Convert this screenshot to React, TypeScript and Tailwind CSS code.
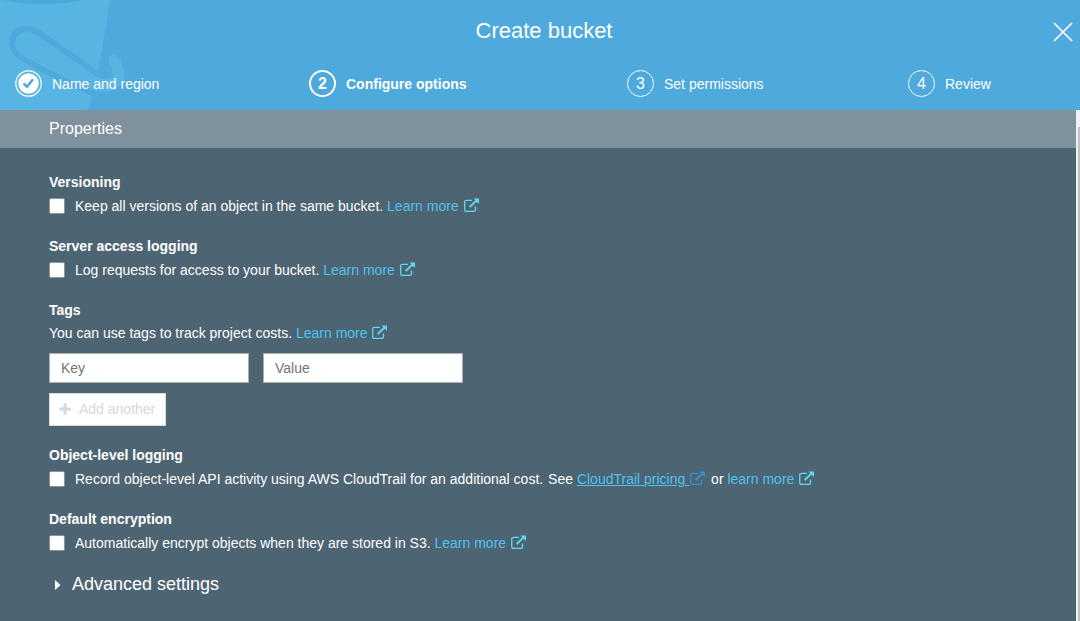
import React from "react";

function ExternalIcon({ className = "ml-px text-[#62d3f0]" }: { className?: string }) {
  return (
    <svg className={`inline-block h-[14px] w-[15px] align-[-1px] ${className}`} viewBox="0 0 15 14" fill="none" stroke="currentColor">
      <path d="M8 2.300H2.600Q0.700 2.300 0.700 4.200V11.400Q0.700 13.300 2.600 13.300H9.600Q11.500 13.300 11.500 11.400V8.500" strokeWidth="1.300" />
      <path d="M5.700 9L12.500 2.500" strokeWidth="2" />
      <path d="M9.500 0.500H15V6z" fill="currentColor" stroke="none" />
    </svg>
  );
}

function LearnMore({ label = "Learn more" }: { label?: string }) {
  return (
    <a className="text-[#4dc3f0]">
      {label} <ExternalIcon />
    </a>
  );
}

function Bucket() {
  return (
    <svg className="absolute left-0 top-0" width="130" height="110" viewBox="0 0 130 110" fill="none">
      <path d="M0 0H110.500L98.500 70L92 95Q91 106 87 110H0Z" fill="#57b4e3" />
      <path d="M4 0H83Q64 4 44 4Q20 4 4 0Z" fill="#4ba8dc" />
      <path d="M94 75Q103 80 109 77Q116 71 109 63Q107 56 113 55Q118 54 122 63Q128 79 118 88Q108 95 92 90Z" fill="#57b4e3" />
      <path d="M93 93L80 88Q48 73 20 57C6 47 12 29 26 29Q33 29 39 33L95 72Q105 79 112 73" stroke="#4ea9dd" strokeWidth="6" />
    </svg>
  );
}

function Step({ n, label, state }: { n: number; label: string; state?: "done" | "active" }) {
  return (
    <div className={`flex h-[27px] items-center ${state === "active" ? "font-bold" : ""}`}>
      {state === "done" ? (
        <svg className="mr-[10px] shrink-0" width="27" height="27" viewBox="0 0 27 27" fill="none">
          <circle cx="13.500" cy="13.500" r="13" fill="#57b4e3" />
          <circle cx="13.500" cy="13.500" r="12.700" stroke="#fff" strokeWidth="1.200" />
          <circle cx="13.500" cy="13.500" r="10.300" fill="#fff" />
          <path d="M8.500 13.300L12 16.700L18 9.200" stroke="#4ea9dd" strokeWidth="2.500" />
        </svg>
      ) : (
        <span className={`mr-[10px] flex size-[27px] shrink-0 items-center justify-center rounded-full border-white text-base ${state === "active" ? "border-2" : "border"}`}>
          {n}
        </span>
      )}
      <span>{label}</span>
    </div>
  );
}

function Check({ children }: { children: React.ReactNode }) {
  return (
    <div className="mt-1 flex h-5 items-center">
      <span className="mr-[10px] size-4 shrink-0 rounded-[2px] border border-[#8f9498] bg-white" />
      <span className="whitespace-pre">{children}</span>
    </div>
  );
}

function Section({ title, className = "h-16", children }: { title: string; className?: string; children: React.ReactNode }) {
  return (
    <section className={className}>
      <h3 className="font-bold">{title}</h3>
      {children}
    </section>
  );
}

export default function App() {
  return (
    <div className="flex h-[621px] w-[1080px] flex-col overflow-hidden bg-[#4d6472] font-['Liberation_Sans',Arial,sans-serif] text-sm leading-5 text-white">
      <header className="relative h-[110px] shrink-0 bg-[#4ea9dd]">
        <Bucket />
        <div className="relative flex h-[70px] justify-center pl-2 pt-4">
          <h1 className="text-[22px] leading-[30px]">Create bucket</h1>
          <svg className="absolute right-[7px] top-[22px]" width="20" height="20" viewBox="0 0 20 20">
            <path d="M1 1L19 19M19 1L1 19" stroke="#fff" strokeWidth="1.700" />
          </svg>
        </div>
        <div className="relative grid grid-cols-[294px_318px_281px_1fr] pl-[15px]">
          <Step n={1} label="Name and region" state="done" />
          <Step n={2} label="Configure options" state="active" />
          <Step n={3} label="Set permissions" />
          <Step n={4} label="Review" />
        </div>
      </header>
      <div className="flex flex-1">
        <main className="flex-1">
          <h2 className="h-[38px] bg-[#7f919c] pl-[49px] text-base leading-[37px]">Properties</h2>
          <div className="pl-[49px] pt-6">
            <Section title="Versioning">
              <Check>Keep all versions of an object in the same bucket. <LearnMore /></Check>
            </Section>
            <Section title="Server access logging">
              <Check>Log requests for access to your bucket. <LearnMore /></Check>
            </Section>
            <Section title="Tags" className="h-[145px]">
              <p className="mt-[3px]">You can use tags to track project costs. <LearnMore /></p>
              <div className="mt-[10px] flex gap-[14px]">
                <input placeholder="Key" className="h-[30px] w-[200px] border border-[#aaaeb0] bg-white px-[11px] placeholder:text-[#757575]" />
                <input placeholder="Value" className="h-[30px] w-[200px] border border-[#aaaeb0] bg-white px-[11px] placeholder:text-[#757575]" />
              </div>
              <button className="mt-[10px] flex h-[33px] w-[117px] items-center border border-[#d5dbdb] bg-white pb-0.5 pl-[9px] text-[#d5d9d9]">
                <svg className="mr-[8px]" width="12" height="12" viewBox="0 0 12 12">
                  <path d="M6 1.500V10.500M1.500 6H10.500" stroke="currentColor" strokeWidth="3" strokeLinecap="round" />
                </svg>
                Add another
              </button>
            </Section>
            <Section title="Object-level logging">
              <Check>
                Record object-level API activity using AWS CloudTrail for an additional cost. <span className="ml-px">See </span>
                <a className="mr-px text-[#4dc3f0] underline">CloudTrail pricing </a>
                <ExternalIcon className="mr-0.5 text-[#3590cf]" /> or <LearnMore label="learn more" />
              </Check>
            </Section>
            <Section title="Default encryption">
              <Check>Automatically encrypt objects when they are stored in S3. <LearnMore /></Check>
            </Section>
            <div className="-mt-px flex h-6 items-center pl-[6px] text-lg">
              <svg className="mr-[11px] mt-0.5" width="6" height="10" viewBox="0 0 6 10">
                <path d="M0 0L5.500 5L0 10Z" fill="#fff" />
              </svg>
              Advanced settings
            </div>
          </div>
        </main>
        <div className="w-1 bg-[#f1f1f1] pl-0.5 pt-[17px]">
          <div className="h-full bg-[#c1c1c1]" />
        </div>
      </div>
    </div>
  );
}
